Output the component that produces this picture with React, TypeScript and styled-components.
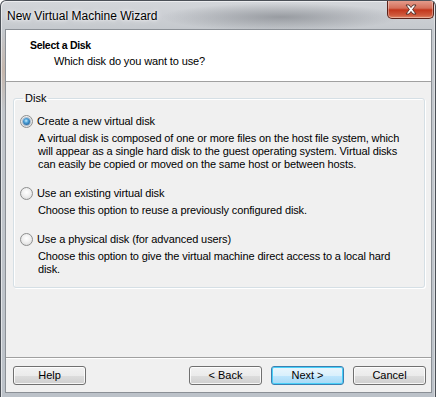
import React from "react";
import styled, { createGlobalStyle, css } from "styled-components";

const Global = createGlobalStyle`
  html, body { margin: 0; padding: 0; background: #ffffff; }
  body { font-family: "Liberation Sans", Arial, sans-serif; }
  * { box-sizing: border-box; }
`;

const Window = styled.div`
  width: 436px;
  height: 397px;
  display: flex;
  flex-direction: column;
  border: 1px solid #4b5057;
  border-bottom: none;
  border-radius: 6px 6px 0 0;
  background:
    radial-gradient(ellipse 120px 14px at 280px 16px, rgba(110,114,120,0.55), rgba(110,114,120,0) 100%),
    radial-gradient(ellipse 60px 40px at 0px 70px, rgba(200,150,110,0.35), rgba(200,150,110,0) 100%),
    linear-gradient(to bottom, #d3d6da 0px, #c4c8cd 30px, #bcc2c9 100%);
  box-shadow: inset 1px 1px 0 rgba(255,255,255,0.55), inset -1px 0 0 rgba(255,255,255,0.4);
  overflow: hidden;
`;

const TitleBar = styled.div`
  height: 28px;
  display: flex;
  align-items: flex-start;
  justify-content: space-between;
  padding-left: 6px;
  padding-right: 1px;
`;

const Title = styled.span`
  margin-top: 8px;
  font-family: "Liberation Sans", Arial, sans-serif;
  font-size: 12px;
  line-height: 15px;
  color: #000;
  text-shadow: 0 0 6px rgba(255,255,255,0.95), 0 0 3px rgba(255,255,255,0.9);
`;

const CloseButton = styled.div`
  width: 47px;
  height: 19px;
  margin-top: -1px;
  display: flex;
  align-items: center;
  justify-content: center;
  border: 1px solid #5b2219;
  border-top: none;
  border-radius: 0 0 5px 5px;
  background: linear-gradient(to bottom, #e6a191 0%, #d5705b 45%, #c2361c 55%, #cf5a3d 85%, #e08a6a 100%);
  box-shadow: inset 0 0 0 1px rgba(255,255,255,0.35);
`;

const Client = styled.div`
  flex: 1;
  margin: 0 3px 4px 4px;
  display: flex;
  flex-direction: column;
  border: 1px solid #8b9096;
  background: #f0f0f0;
`;

const Header = styled.div`
  height: 52px;
  background: #ffffff;
  border-bottom: 1px solid #a0a0a0;
  padding: 8px 0 0 24px;
  display: flex;
  flex-direction: column;
  gap: 3px;
`;

const HeaderTitle = styled.div`
  font-weight: bold;
  font-size: 10.5px;
  letter-spacing: -0.3px;
  line-height: 14px;
  color: #000;
`;

const HeaderSub = styled.div`
  padding-left: 24px;
  font-size: 11px;
  letter-spacing: -0.12px;
  line-height: 13px;
  color: #000;
`;

const Body = styled.div`
  flex: 1;
  padding: 10px 6px 0 7px;
`;

const GroupBox = styled.fieldset`
  margin: 0;
  padding: 9px 6px 11px 6px;
  border: 1px solid #d5dfe5;
  border-radius: 3px;
  box-shadow: inset 1px 1px 0 #ffffff, 1px 1px 0 #ffffff;
  min-inline-size: 0;
`;

const Legend = styled.legend`
  padding: 0 2px;
  margin-left: 3px;
  font-size: 11px;
  line-height: 13px;
  color: #000;
`;

const Option = styled.div<{ $first?: boolean }>`
  margin-top: ${(p) => (p.$first ? "0" : "15px")};
`;

const RadioRow = styled.label`
  display: flex;
  align-items: center;
  gap: 4px;
  height: 14px;
  font-size: 11px;
  letter-spacing: -0.1px;
  line-height: 14px;
  color: #000;
`;

const RadioCircle = styled.span<{ $checked?: boolean }>`
  width: 13px;
  height: 13px;
  border-radius: 50%;
  border: 1px solid #8e8f8f;
  background: radial-gradient(circle at 50% 40%, #ffffff 0%, #f0f0f0 45%, #d3d3d3 100%);
  display: flex;
  align-items: center;
  justify-content: center;
  flex: none;
  ${(p) =>
    p.$checked &&
    css`
      &::after {
        content: "";
        width: 7px;
        height: 7px;
        border-radius: 50%;
        background: radial-gradient(circle at 45% 40%, #c6ecff 0%, #4fa3d9 35%, #1e5f9a 80%, #0f3e6e 100%);
        box-shadow: 0 0 0 1px rgba(40,90,140,0.35);
      }
    `}
`;

const Desc = styled.div`
  margin-top: 4px;
  padding-left: 18px;
  font-size: 11px;
  letter-spacing: -0.12px;
  line-height: 13px;
  color: #000;
`;

const Footer = styled.div`
  border-top: 1px solid #a0a0a0;
  box-shadow: inset 0 1px 0 #ffffff;
  padding: 8px 5px 7px 7px;
  display: flex;
  justify-content: space-between;
`;

const ButtonGroup = styled.div`
  display: flex;
  gap: 9px;
`;

const Button = styled.button<{ $default?: boolean }>`
  width: 73px;
  height: 19px;
  padding: 0;
  font-family: "Liberation Sans", Arial, sans-serif;
  font-size: 11px;
  line-height: 17px;
  color: #000;
  border: 1px solid #707070;
  border-radius: 3px;
  background: linear-gradient(to bottom, #f2f2f2 0%, #ebebeb 50%, #dddddd 51%, #cfcfcf 100%);
  box-shadow: inset 0 0 0 1px rgba(255,255,255,0.8);
  ${(p) =>
    p.$default &&
    css`
      border-color: #3c7fb1;
      background: linear-gradient(to bottom, #eaf6fd 0%, #d9f0fc 50%, #bee6fd 51%, #a7d9f5 100%);
      box-shadow: inset 0 0 0 1px #48d0f9;
    `}
`;

function CloseIcon() {
  return (
    <svg width="14" height="11" viewBox="0 0 14 11">
      <path
        d="M2 1 L5 1 L7 3.5 L9 1 L12 1 L8.6 5.5 L12 10 L9 10 L7 7.5 L5 10 L2 10 L5.4 5.5 Z"
        fill="#ffffff"
        stroke="#4a2a24"
        strokeWidth="0.9"
        strokeLinejoin="round"
      />
    </svg>
  );
}

export default function App() {
  return (
    <>
      <Global />
      <Window>
        <TitleBar>
          <Title>New Virtual Machine Wizard</Title>
          <CloseButton>
            <CloseIcon />
          </CloseButton>
        </TitleBar>
        <Client>
          <Header>
            <HeaderTitle>Select a Disk</HeaderTitle>
            <HeaderSub>Which disk do you want to use?</HeaderSub>
          </Header>
          <Body>
            <GroupBox>
              <Legend>Disk</Legend>
              <Option $first>
                <RadioRow>
                  <RadioCircle $checked />
                  Create a new virtual disk
                </RadioRow>
                <Desc>
                  A virtual disk is composed of one or more files on the host file system, which
                  <br />
                  will appear as a single hard disk to the guest operating system. Virtual disks
                  <br />
                  can easily be copied or moved on the same host or between hosts.
                </Desc>
              </Option>
              <Option>
                <RadioRow>
                  <RadioCircle />
                  Use an existing virtual disk
                </RadioRow>
                <Desc>Choose this option to reuse a previously configured disk.</Desc>
              </Option>
              <Option>
                <RadioRow>
                  <RadioCircle />
                  Use a physical disk (for advanced users)
                </RadioRow>
                <Desc>
                  Choose this option to give the virtual machine direct access to a local hard
                  <br />
                  disk.
                </Desc>
              </Option>
            </GroupBox>
          </Body>
          <Footer>
            <Button>Help</Button>
            <ButtonGroup>
              <Button>&lt; Back</Button>
              <Button $default>Next &gt;</Button>
              <Button>Cancel</Button>
            </ButtonGroup>
          </Footer>
        </Client>
      </Window>
    </>
  );
}
